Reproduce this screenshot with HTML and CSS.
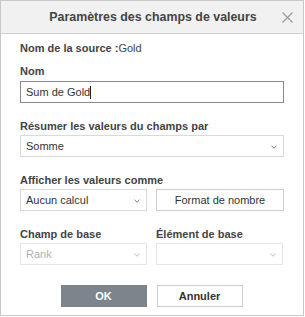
FILE: index.html
```html
<!DOCTYPE html>
<html lang="fr">
<head>
<meta charset="utf-8">
<link rel="stylesheet" href="styles.css">
</head>
<body>
<div class="dialog">
  <div class="header">
    <span class="title">Paramètres des champs de valeurs</span>
    <span class="close"><svg width="11" height="11" viewBox="0 0 11 11"><path d="M0.5 0.5 L10.5 10.5 M10.5 0.5 L0.5 10.5" stroke="#9a9a9a" stroke-width="1.1" fill="none"/></svg></span>
  </div>
  <div class="content">
    <div class="source"><b>Nom de la source :</b>Gold</div>
    <div class="group g-name">
      <div class="label">Nom</div>
      <div class="input focus">Sum de Gold<span class="caret"></span></div>
    </div>
    <div class="group">
      <div class="label">Résumer les valeurs du champs par</div>
      <div class="input select">Somme<svg class="chev" width="6" height="4" viewBox="0 0 6 4"><path d="M0.5 0.8 L3 3.2 L5.5 0.8" stroke="#777" stroke-width="1" fill="none"/></svg></div>
    </div>
    <div class="group">
      <div class="label">Afficher les valeurs comme</div>
      <div class="row">
        <div class="input select">Aucun calcul<svg class="chev" width="6" height="4" viewBox="0 0 6 4"><path d="M0.5 0.8 L3 3.2 L5.5 0.8" stroke="#777" stroke-width="1" fill="none"/></svg></div>
        <div class="input btn-format">Format de nombre</div>
      </div>
    </div>
    <div class="group">
      <div class="row labels">
        <div class="label">Champ de base</div>
        <div class="label">Élément de base</div>
      </div>
      <div class="row">
        <div class="input select disabled">Rank<svg class="chev" width="6" height="4" viewBox="0 0 6 4"><path d="M0.5 0.8 L3 3.2 L5.5 0.8" stroke="#bbb" stroke-width="1" fill="none"/></svg></div>
        <div class="input select disabled"><svg class="chev" width="6" height="4" viewBox="0 0 6 4"><path d="M0.5 0.8 L3 3.2 L5.5 0.8" stroke="#bbb" stroke-width="1" fill="none"/></svg></div>
      </div>
    </div>
    <div class="footer">
      <div class="btn ok">OK</div>
      <div class="btn cancel">Annuler</div>
    </div>
  </div>
</div>
</body>
</html>
```
FILE: styles.css
```css
* { box-sizing: border-box; }
html, body { margin: 0; padding: 0; background: #fff; }
body { font-family: "Liberation Sans", Arial, sans-serif; font-size: 11px; color: #444; }
.dialog {
  width: 304px;
  height: 316px;
  border: 1px solid #c8c8c8;
  background: #fff;
}
.header {
  height: 33px;
  background: #f1f1f1;
  border-bottom: 1px solid #cfcfcf;
  display: flex;
  align-items: center;
  justify-content: center;
  position: relative;
}
.title { font-size: 12.4px; font-weight: bold; color: #444; margin-left: 2px; }
.close { position: absolute; right: 10px; top: 11px; width: 11px; height: 11px; display: block; }
.close svg { display: block; }
.content { padding: 7px 19px 0 19px; }
.source { line-height: 14px; }
.source b { font-weight: bold; }
.label { font-weight: bold; line-height: 14px; color: #444; }
.group { margin-top: 16px; display: flex; flex-direction: column; gap: 2px; }
.g-name { margin-top: 9px; gap: 3px; }
.row { display: flex; gap: 9px; }
.row > * { flex: 0 0 127px; }
.row > .btn-format { flex: 0 0 128px; }
.labels .label { flex: 0 0 127px; }
.input {
  height: 22px;
  border: 1px solid #dadada;
  padding: 0 5px;
  display: flex;
  align-items: center;
  color: #333;
  position: relative;
  line-height: 14px;
}
.focus { border-color: #8a8a8a; }
.caret { display: inline-block; width: 1px; height: 13px; background: #222; }
.chev { position: absolute; right: 6px; top: 9px; }
.btn-format { justify-content: center; color: #333; border-color: #cfcfcf; }
.disabled { color: #b0b0b0; border-color: #e6e6e6; }
.footer {
  margin-top: 20px;
  display: flex;
  justify-content: center;
  gap: 10px;
  padding-right: 1px;
}
.btn {
  width: 86px;
  height: 22px;
  display: flex;
  align-items: center;
  justify-content: center;
  font-weight: bold;
  font-size: 11px;
}
.ok { background: #7d858c; color: #fff; }
.cancel { border: 1px solid #cfcfcf; color: #333; }
```
